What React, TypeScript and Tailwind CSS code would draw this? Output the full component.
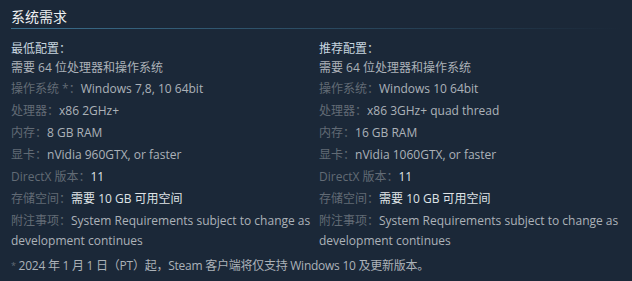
import React from "react";

const font = {
  fontFamily: '"Open Sans", "Noto Sans CJK SC", sans-serif',
};

type Row = { label: string; value: string; bright?: boolean };

const minimum: Row[] = [
  { label: "操作系统 *：", value: "Windows 7,8, 10 64bit" },
  { label: "处理器：", value: "x86 2GHz+" },
  { label: "内存：", value: "8 GB RAM" },
  { label: "显卡：", value: "nVidia 960GTX, or faster" },
  { label: "DirectX 版本：", value: "11", bright: true },
  { label: "存储空间：", value: "需要 10 GB 可用空间", bright: true },
  { label: "附注事项：", value: "System Requirements subject to change as development continues" },
];

const recommended: Row[] = [
  { label: "操作系统：", value: "Windows 10 64bit" },
  { label: "处理器：", value: "x86 3GHz+ quad thread" },
  { label: "内存：", value: "16 GB RAM" },
  { label: "显卡：", value: "nVidia 1060GTX, or faster" },
  { label: "DirectX 版本：", value: "11", bright: true },
  { label: "存储空间：", value: "需要 10 GB 可用空间", bright: true },
  { label: "附注事项：", value: "System Requirements subject to change as development continues" },
];

function Column({ title, rows, className }: { title: string; rows: Row[]; className: string }) {
  return (
    <div className={className}>
      <div className="text-[#c6d4df] leading-[19px]">{title}</div>
      <div className="text-[#acb2b8] leading-[19px]">需要 64 位处理器和操作系统</div>
      <ul className="mt-[2px]">
        {rows.map((r) => (
          <li key={r.label} className="leading-[20px] mb-[2px]">
            <span className="text-[#626b75]">{r.label}</span>
            <span className={r.bright ? "text-[#dfe3e6]" : "text-[#acb2b8]"}>{r.value}</span>
          </li>
        ))}
      </ul>
    </div>
  );
}

export default function App() {
  return (
    <div className="w-[632px] h-[281px] bg-[#1b2838] px-[11px] pt-[7px] text-[12px]" style={font}>
      <div className="text-[14px] text-[#eef0f2] leading-[19px] pb-[2px]">系统需求</div>
      <div className="h-px bg-gradient-to-r from-[#3b6e8c] to-[#3b6e8c00]" />
      <div className="flex mt-[10px]">
        <Column title="最低配置：" rows={minimum} className="w-[308px] shrink-0 pr-2" />
        <Column title="推荐配置：" rows={recommended} className="flex-1" />
      </div>
      <div className="mt-[3px] text-[#acb2b8] leading-[20px] tracking-[-0.25px]">
        <span className="text-[#626b75] text-[9px] align-top">*</span> 2024 年 1 月 1 日（PT）起，Steam 客户端将仅支持 Windows 10 及更新版本。
      </div>
    </div>
  );
}
